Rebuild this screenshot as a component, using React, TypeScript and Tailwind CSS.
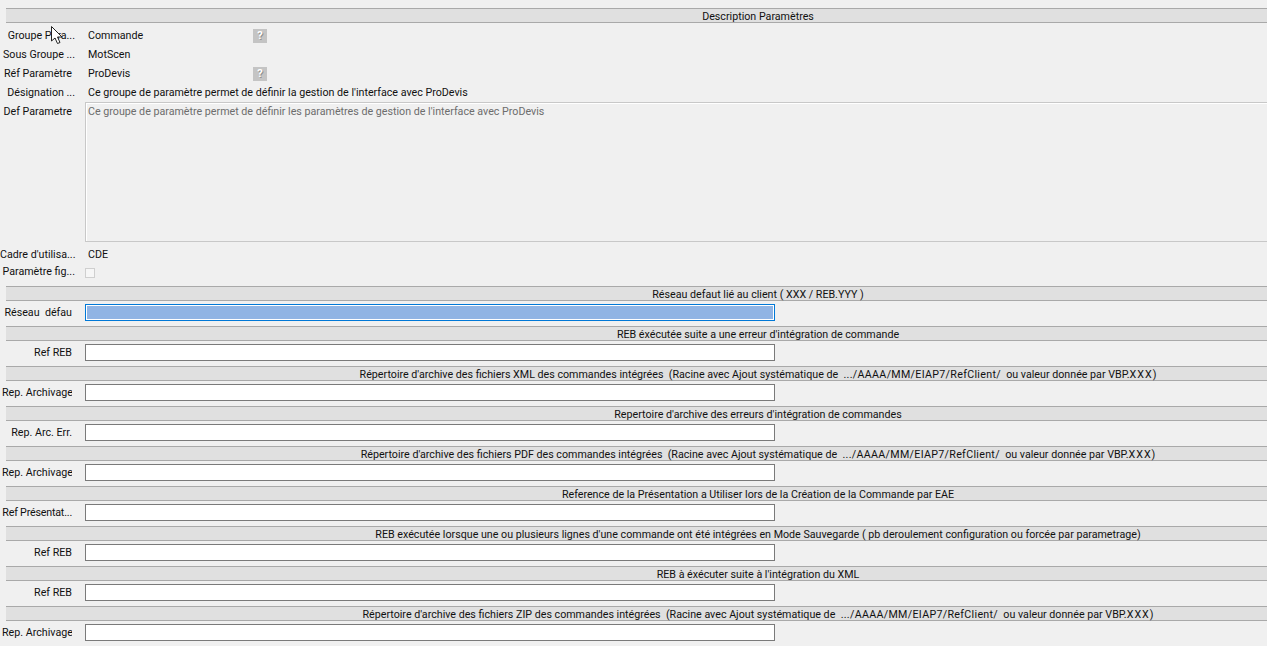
import React from "react";

function SectionBar({ title }: { title: React.ReactNode }) {
  return (
    <div className="ml-[6px] h-[15px] w-[1504px] border-y border-[#a9a9a9] bg-[#e0e0e0] text-center leading-[15px] whitespace-pre">
      {title}
    </div>
  );
}

function Help() {
  return (
    <div className="flex h-[14px] w-[14px] items-center justify-center bg-[#c4c4c4] text-[11px] font-bold leading-none text-white [text-shadow:1px_1px_0_#8f8f8f]">
      ?
    </div>
  );
}

function InfoRow({ label, value, help, pr = 0 }: { label: string; value: string; help?: boolean; pr?: number }) {
  return (
    <div className="flex h-[19px] items-center">
      <div className={`w-[75px] shrink-0 pt-[2px] text-right whitespace-nowrap ${pr ? "pr-[3px]" : ""}`}>{label}</div>
      <div className="ml-[13px] w-[165px] shrink-0 pt-[2px] whitespace-nowrap">{value}</div>
      {help && <Help />}
    </div>
  );
}

function InputRow({ label, selected, tight }: { label: string; selected?: boolean; tight?: boolean }) {
  return (
    <div className="mt-[3px] flex h-[17px] items-center">
      <div className={`ml-[2px] w-[70px] shrink-0 overflow-hidden pt-[2px] text-right whitespace-pre ${tight ? "tracking-[-0.2px]" : ""}`}>{label}</div>
      {selected ? (
        <div className="ml-[13px] h-[17px] w-[690px] border border-[#0078d7] bg-white p-px">
          <div className="h-full w-full bg-[#90b4e4]" />
        </div>
      ) : (
        <div className="ml-[13px] h-[17px] w-[690px] border border-[#7a7a7a] bg-white" />
      )}
    </div>
  );
}

function archiveTitle(kind: string) {
  return (
    <>
      {`Répertoire d'archive des fichiers ${kind} des commandes intégrées  (Racine avec Ajout systématique de  `}
      <span className="tracking-[0.3px]">.../AAAA/MM/EIAP7/RefClient/</span>
      {"  ou valeur donnée par VBP."}
      <span className="tracking-[1px]">XXX</span>
      {")"}
    </>
  );
}

const sections: { title: React.ReactNode; label: string; selected?: boolean; tight?: boolean }[] = [
  { title: "Réseau defaut lié au client ( XXX / REB.YYY )", label: "Réseau  défau", selected: true },
  { title: "REB éxécutée suite a une erreur d'intégration de commande", label: "Ref REB" },
  { title: archiveTitle("XML"), label: "Rep. Archivage" },
  { title: "Repertoire d'archive des erreurs d'intégration de commandes", label: "Rep. Arc. Err." },
  { title: archiveTitle("PDF"), label: "Rep. Archivage" },
  { title: "Reference de la Présentation a Utiliser lors de la Création de la Commande par EAE", label: "Ref Présentat...", tight: true },
  { title: "REB exécutée lorsque une ou plusieurs lignes d'une commande ont été intégrées en Mode Sauvegarde ( pb deroulement configuration ou forcée par parametrage)", label: "Ref REB" },
  { title: "REB à éxécuter suite à l'intégration du XML", label: "Ref REB" },
  { title: archiveTitle("ZIP"), label: "Rep. Archivage" },
];

export default function App() {
  return (
    <div className="relative h-[646px] w-[1267px] overflow-hidden bg-[#f0f0f0] pt-2 font-['Roboto',sans-serif] text-[10.7px] text-[#111]">
      <SectionBar title="Description Paramètres" />
      <div className="mt-[3px]">
        <InfoRow label="Groupe Para..." value="Commande" help />
        <InfoRow label="Sous Groupe ..." value="MotScen" />
        <InfoRow label="Réf Paramètre" value="ProDevis" help pr={3} />
        <InfoRow label="Désignation ..." value="Ce groupe de paramètre permet de définir la gestion de l'interface avec ProDevis" />
      </div>
      <div className="flex h-[140px]">
        <div className="w-[72px] shrink-0 pt-[2px] text-right whitespace-nowrap">Def Parametre</div>
        <div className="ml-[13px] flex-1 border border-r-0 border-[#c8c8c8] px-[2px] pt-px text-[#6d6d6d] shadow-[inset_1px_1px_0_#fff]">
          Ce groupe de paramètre permet de définir les paramètres de gestion de l'interface avec ProDevis
        </div>
      </div>
      <div className="mt-[3px]">
        <InfoRow label="Cadre d'utilisa..." value="CDE" />
      </div>
      <div className="flex h-4 items-center">
        <div className="w-[75px] shrink-0 pt-px text-right whitespace-nowrap">Paramètre fig...</div>
        <div className="ml-[10px] mt-px h-[10px] w-[10px] border border-[#cfcfcf] bg-[#f6f6f6]" />
      </div>
      <div className="mt-[6px]">
        {sections.map((s, i) => (
          <div key={i} className="h-10">
            <SectionBar title={s.title} />
            <InputRow label={s.label} selected={s.selected} tight={s.tight} />
          </div>
        ))}
      </div>
      <svg className="absolute left-[50px] top-[25px]" width="14" height="20" viewBox="0 0 14 20">
        <path d="M1.5 1.5 L1.5 16 L5 13 L7.5 18.5 L10 17.5 L7.5 12 L12 12 Z" fill="#fff" stroke="#222" strokeWidth="1" strokeLinejoin="miter" />
      </svg>
    </div>
  );
}
